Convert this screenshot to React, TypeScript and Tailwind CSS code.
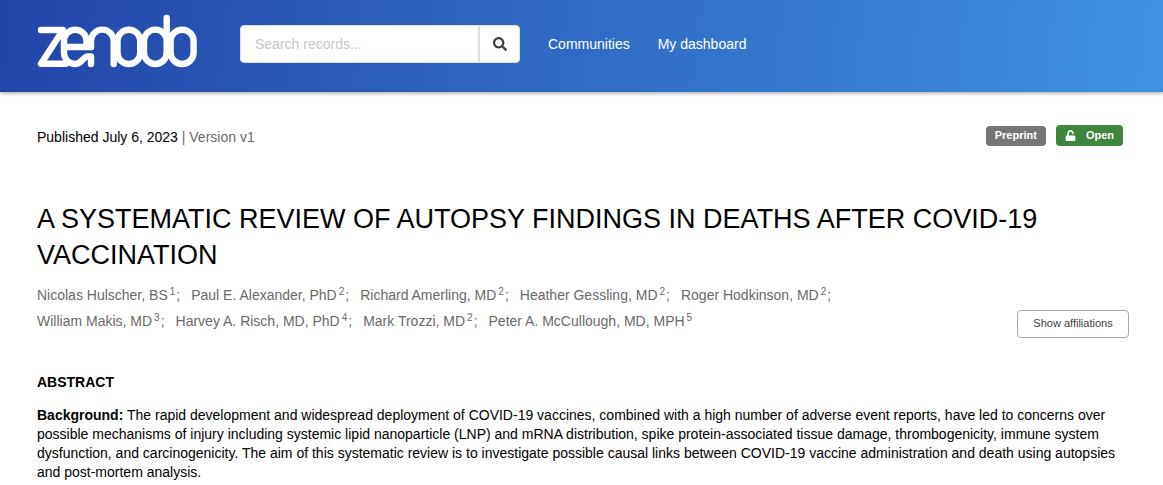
import React from 'react';

import { FaSearch, FaUnlock } from 'react-icons/fa';

const CREATORS = [
  { name: 'Nicolas Hulscher, BS', affiliation: 1 },
  { name: 'Paul E. Alexander, PhD', affiliation: 2 },
  { name: 'Richard Amerling, MD', affiliation: 2 },
  { name: 'Heather Gessling, MD', affiliation: 2 },
  { name: 'Roger Hodkinson, MD', affiliation: 2 },
  { name: 'William Makis, MD', affiliation: 3 },
  { name: 'Harvey A. Risch, MD, PhD', affiliation: 4 },
  { name: 'Mark Trozzi, MD', affiliation: 2 },
  { name: 'Peter A. McCullough, MD, MPH', affiliation: 5 },
];

function Logo() {
  return (
    <svg
      viewBox="37 14 160 54"
      className="h-[54px] w-[160px]"
      fill="none"
      stroke="white"
      strokeWidth="6.4"
      strokeLinecap="round"
      strokeLinejoin="round"
      role="img"
      aria-label="Zenodo"
    >
      <path d="M41 30H63L41 63.7H66" />
      <path d="M65 47H91M86.5 47V41A11.25 11.25 0 0 0 64 41V53A11.25 11.25 0 0 0 75 64C82 64 83 56.4 88 56.4H91V64" />
      <path d="M91 47V41A11.35 11.35 0 0 1 113.7 41V64" />
      <rect x="117.5" y="29.7" width="22.7" height="34.3" rx="11.35" />
      <path d="M166.7 18V52.6A11.35 11.35 0 0 1 144 52.6V41A11.35 11.35 0 0 1 166.7 41" />
      <rect x="170.6" y="29.7" width="23" height="34.3" rx="11.5" />
    </svg>
  );
}

function Header() {
  return (
    <header className="flex h-[92px] items-center bg-[linear-gradient(97deg,#2244a8,#4092e2)] px-[37px] shadow-[0_1px_4px_rgba(0,0,0,0.4)]">
      <a href="/" className="mb-[10px]">
        <Logo />
      </a>
      <form className="mb-1 ml-[43px] flex h-[38px] w-[280px] overflow-hidden rounded border border-[#dedede] bg-white">
        <input
          type="search"
          aria-label="Search records"
          placeholder="Search records..."
          className="min-w-0 flex-1 px-[14px] text-sm outline-none placeholder:text-[#c7c7c7]"
        />
        <button
          type="submit"
          aria-label="Search"
          className="flex w-[41px] items-center justify-center border-l-2 border-[#dedede] text-[#404040]"
        >
          <FaSearch className="size-[14px]" />
        </button>
      </form>
      <nav className="mb-1 ml-7 flex gap-7 text-sm text-white">
        <a href="/communities">Communities</a>
        <a href="/me">My dashboard</a>
      </nav>
    </header>
  );
}

export default function App() {
  return (
    <div className="bg-white font-['Helvetica_Neue','Liberation_Sans',Arial,sans-serif] text-sm text-black">
      <Header />
      <main className="px-[37px] pt-[33px]">
        <section className="flex items-start justify-between">
          <p className="pt-[2px]">
            Published July 6, 2023{' '}
            <span className="text-[#6a6a6a]">| Version v1</span>
          </p>
          <div className="mr-[3px] flex items-center gap-[10px] text-[11px] font-bold text-white">
            <span className="flex h-5 items-center rounded bg-[#767676] px-[9px]">
              Preprint
            </span>
            <span className="flex h-[21px] items-center gap-[10px] rounded bg-[#3f873f] px-[9px]">
              <FaUnlock className="size-[11px]" />
              Open
            </span>
          </div>
        </section>
        <h1 className="mt-[54px] text-[27px] leading-9">
          A SYSTEMATIC REVIEW OF AUTOPSY FINDINGS IN DEATHS AFTER COVID-19
          VACCINATION
        </h1>
        <section className="mt-[9px] flex items-end justify-between">
          <ul className="flex max-w-[860px] flex-wrap gap-x-[11px] pb-1 text-[#6a6a6a]">
            {CREATORS.map(({ name, affiliation }, index) => (
              <li key={name} className="leading-[26px]">
                {name}
                <sup className="mr-px ml-[2px] text-[10px]">{affiliation}</sup>
                {index < CREATORS.length - 1 && ';'}
              </li>
            ))}
          </ul>
          <button
            type="button"
            className="-mr-[3px] h-7 w-28 rounded border border-[#a8a8a8] text-[11px] text-[#404040]"
          >
            Show affiliations
          </button>
        </section>
        <section className="mt-[34px]">
          <h2 className="font-bold">ABSTRACT</h2>
          <p className="mt-[14px] -mr-1 leading-[19px]">
            <strong>Background:</strong> The rapid development and widespread
            deployment of COVID-19 vaccines, combined with a high number of
            adverse event reports, have led to concerns over possible mechanisms
            of injury including systemic lipid nanoparticle (LNP) and mRNA
            distribution, spike protein-associated tissue damage,
            thrombogenicity, immune system dysfunction, and carcinogenicity. The
            aim of this systematic review is to investigate possible causal
            links between COVID-19 vaccine administration and death using
            autopsies and post-mortem analysis.
          </p>
        </section>
      </main>
    </div>
  );
}
